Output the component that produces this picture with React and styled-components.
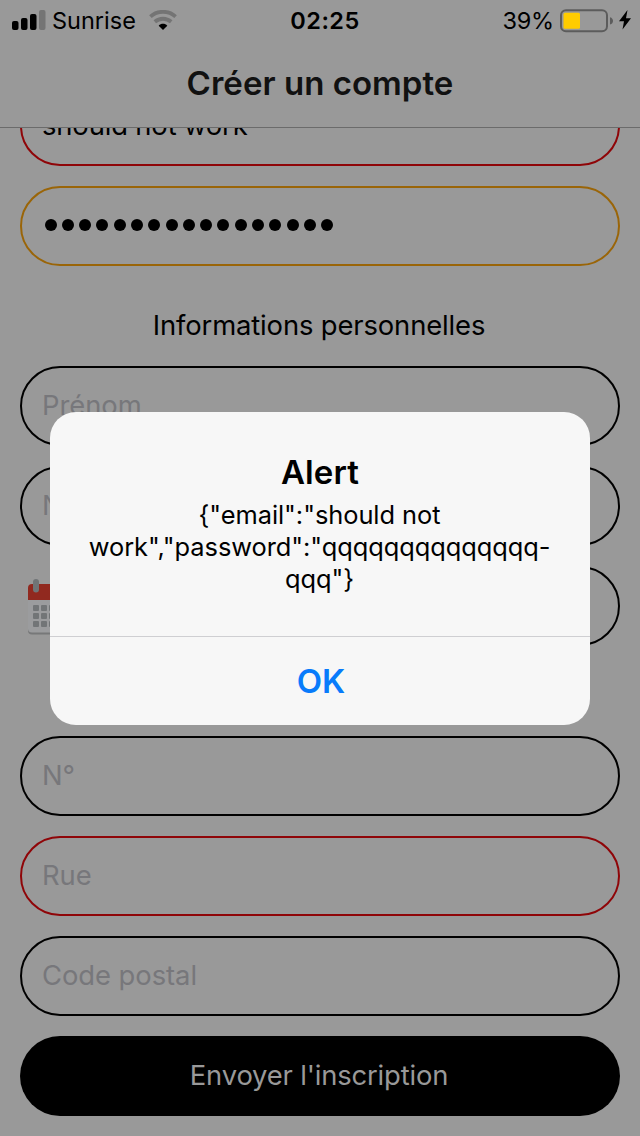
import React from "react";
import styled, { createGlobalStyle } from "styled-components";

const GlobalStyle = createGlobalStyle`
  * { box-sizing: border-box; }
  body { margin: 0; background: #999; }
`;

const Screen = styled.div`
  position: relative;
  display: flex;
  flex-direction: column;
  width: 640px;
  height: 1136px;
  overflow: hidden;
  background: #999;
  color: #000;
  font-family: Inter, "Liberation Sans", sans-serif;
  font-size: 27.4px;
`;

const StatusBar = styled.div`
  display: grid;
  grid-template-columns: 1fr auto 1fr;
  align-items: center;
  height: 40px;
  padding: 0 8px 0 12px;
  font-size: 23.5px;
  line-height: 38px;
`;

const StatusGroup = styled.div`
  display: flex;
  align-items: center;
  justify-content: ${(p) => (p.$end ? "flex-end" : "flex-start")};
`;

const StatusText = styled.span`
  padding-top: 2px;
  font-weight: ${(p) => p.$weight || 400};
  letter-spacing: ${(p) => p.$spacing || "0"};
  margin: ${(p) => p.$margin || "0"};
`;

const Icon = styled.svg`
  display: block;
  flex: none;
  margin: ${(p) => p.$margin || "0"};
`;

const Header = styled.h1`
  margin: 0;
  height: 88px;
  border-bottom: 1px solid #6b6b6b;
  color: #111;
  font-size: 33px;
  font-weight: 600;
  line-height: 86px;
  letter-spacing: 0.03px;
  text-align: center;
`;

const FormViewport = styled.div`
  flex: 1;
  min-height: 0;
  overflow: hidden;
`;

const Form = styled.div`
  display: flex;
  flex-direction: column;
  gap: 20px;
  margin-top: -42px;
  padding: 0 20px;
`;

const Field = styled.div`
  display: flex;
  align-items: center;
  flex: 1 0 auto;
  height: 80px;
  padding: 0 20px 2px;
  border: 2px solid ${(p) => p.$border || "#000"};
  border-radius: 40px;
  color: ${(p) => (p.$filled ? "#000" : "#77777b")};
  letter-spacing: ${(p) => p.$spacing || "-0.06px"};
`;

const Dots = styled.div`
  display: flex;
  gap: 5.3px;
  padding: 0 0 0 2.5px;
`;

const Dot = styled.i`
  width: 12px;
  height: 12px;
  border-radius: 50%;
  background: #000;
`;

const SectionTitle = styled.h2`
  margin: 0;
  height: 60px;
  padding: 20px 2px 0 0;
  font-size: 27.4px;
  font-weight: 400;
  line-height: 39px;
  letter-spacing: -0.13px;
  text-align: center;
`;

const DateRow = styled.div`
  display: flex;
  align-items: center;
  gap: 12px;
  padding-left: 8px;
  margin-bottom: 70px;
`;

const SubmitButton = styled.button`
  height: 80px;
  padding: 0 2px 2px 0;
  border: 0;
  border-radius: 40px;
  background: #000;
  color: #999;
  font: inherit;
  letter-spacing: -0.17px;
`;

const Alert = styled.div`
  position: absolute;
  top: 412px;
  left: 50px;
  display: flex;
  flex-direction: column;
  width: 540px;
  height: 313px;
  border-radius: 26px;
  background: #f7f7f7;
  text-align: center;
`;

const AlertBody = styled.div`
  flex: 1;
  padding-top: 40px;
`;

const AlertTitle = styled.div`
  font-size: 33px;
  font-weight: 600;
  line-height: 41px;
  letter-spacing: 0.1px;
`;

const AlertLine = styled.div`
  font-size: 25.4px;
  line-height: 32px;
  letter-spacing: -0.05px;
`;

const AlertMessage = styled.div`
  padding: 6px 1px 0 0;
`;

const AlertAction = styled.button`
  height: 89px;
  padding: 0 0 1px 2px;
  border: 0;
  border-top: 1px solid #cfcfd2;
  background: none;
  color: #087bfb;
  font: inherit;
  font-size: 33px;
  font-weight: 600;
`;

const SignalIcon = () => (
  <Icon width="34" height="20" viewBox="0 0 34 20">
    <rect x="0" y="11" width="6.5" height="9" rx="2" />
    <rect x="9" y="8" width="6.5" height="12" rx="2" />
    <rect x="18" y="4" width="6.5" height="16" rx="2" />
    <rect x="27" y="0" width="6.5" height="20" rx="2" fill="#747474" />
  </Icon>
);

const WifiIcon = () => (
  <Icon width="28" height="20" viewBox="0 0 28 20" $margin="0 0 0 13px">
    <g fill="none" stroke="#747474" strokeWidth="3.8">
      <path d="M1.4 6.6C8.4 .2 19.6 .2 26.6 6.6" />
      <path d="M5.8 11.8C10.6 7.7 17.4 7.7 22.2 11.8" />
    </g>
    <path d="M14 20L9.7 15.8C12 13.2 16 13.2 18.3 15.8Z" />
  </Icon>
);

const BatteryIcon = () => (
  <Icon width="54" height="24" viewBox="0 0 54 24" $margin="1px 0 0 6px">
    <rect x="1" y="1.2" width="46" height="21" rx="5" fill="none" stroke="#5c5c5c" strokeWidth="2" />
    <rect x="3.5" y="3.7" width="16.5" height="16" rx="1.5" fill="#fc0" />
    <path d="M50 8.2C54 9.4 54 14.4 50 15.6Z" fill="#5c5c5c" />
  </Icon>
);

const BoltIcon = () => (
  <Icon width="13" height="20" viewBox="0 0 13 20" $margin="0 0 0 5px">
    <path d="M8.5 0L0 11.3H5L3.5 19.5L12 8.2H7Z" />
  </Icon>
);

const CalendarIcon = () => (
  <Icon width="52" height="58" viewBox="0 0 52 58" $margin="0 0 -3px">
    <rect y="7" width="52" height="48.5" rx="4" fill="#777879" />
    <rect y="5" width="52" height="48.5" rx="4" fill="#9b9c9e" />
    <path d="M0 21V9Q0 5 4 5H48Q52 5 52 9V21Z" fill="#91291f" />
    <rect x="5" y="0" width="6" height="13.5" rx="3" fill="#707476" />
    <rect x="41" y="0" width="6" height="13.5" rx="3" fill="#707476" />
    {[26, 34, 42].map((y) =>
      [5, 13, 21, 29, 37].map((x) => (
        <rect key={`${x}-${y}`} x={x} y={y} width="6" height="6" rx="1" fill="#727577" />
      ))
    )}
  </Icon>
);

export default function App() {
  return (
    <Screen>
      <GlobalStyle />
      <StatusBar>
        <StatusGroup>
          <SignalIcon />
          <StatusText $margin="0 0 0 6px">Sunrise</StatusText>
          <WifiIcon />
        </StatusGroup>
        <StatusText $weight={600} $spacing="0.45px" $margin="0 0 0 6px">02:25</StatusText>
        <StatusGroup $end>
          <StatusText $spacing="-0.2px">39%</StatusText>
          <BatteryIcon />
          <BoltIcon />
        </StatusGroup>
      </StatusBar>
      <Header>Créer un compte</Header>
      <FormViewport>
        <Form>
          <Field $border="#8f0508" $spacing="-0.15px" $filled>should not work</Field>
          <Field $border="#9a6508">
            <Dots>
              {Array.from({ length: 17 }, (_, i) => (
                <Dot key={i} />
              ))}
            </Dots>
          </Field>
          <SectionTitle>Informations personnelles</SectionTitle>
          <Field>Prénom</Field>
          <Field>Nom</Field>
          <DateRow>
            <CalendarIcon />
            <Field />
          </DateRow>
          <Field>N°</Field>
          <Field $border="#8f0508">Rue</Field>
          <Field>Code postal</Field>
          <SubmitButton>Envoyer l'inscription</SubmitButton>
        </Form>
      </FormViewport>
      <Alert>
        <AlertBody>
          <AlertTitle>Alert</AlertTitle>
          <AlertMessage>
            <AlertLine>{'{"email":"should not'}</AlertLine>
            <AlertLine>{'work","password":"qqqqqqqqqqqqqq-'}</AlertLine>
            <AlertLine>{'qqq"}'}</AlertLine>
          </AlertMessage>
        </AlertBody>
        <AlertAction>OK</AlertAction>
      </Alert>
    </Screen>
  );
}
